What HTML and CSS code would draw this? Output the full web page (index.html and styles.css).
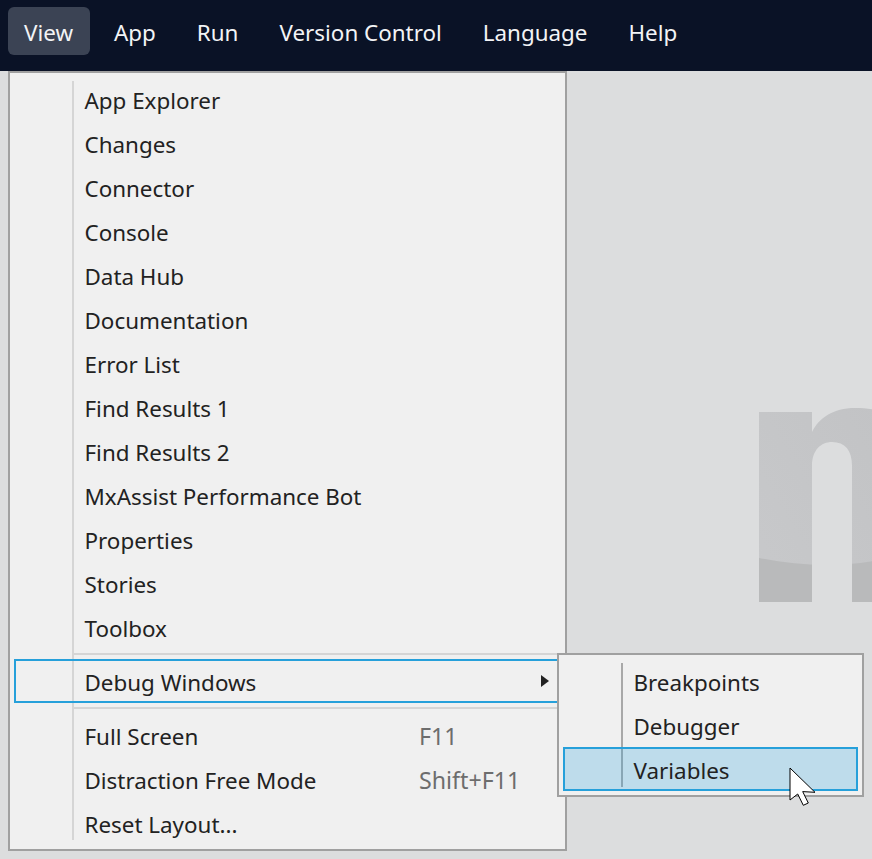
FILE: index.html
```html
<!DOCTYPE html>
<html lang="en">
<head>
<meta charset="utf-8">
<title>View menu</title>
<link rel="stylesheet" href="styles.css">
</head>
<body>
<nav class="menubar">
  <span class="nav-item active">View</span>
  <span class="nav-item">App</span>
  <span class="nav-item">Run</span>
  <span class="nav-item">Version Control</span>
  <span class="nav-item">Language</span>
  <span class="nav-item">Help</span>
</nav>
<main class="workspace">
  <svg class="logo" width="120" height="200" viewBox="0 0 120 200" aria-hidden="true">
    <defs>
      <linearGradient id="logoTop" x1="0" y1="1" x2="1" y2="0">
        <stop offset="0" stop-color="#c8c9cb"/>
        <stop offset="1" stop-color="#c2c3c5"/>
      </linearGradient>
      <clipPath id="logoN">
        <path d="M0 4H53V24C60 10 74 0 96 0C110 0 120 2 130 6V194H93V58C93 42 86 34 73 34C62 34 53 42 53 58V194H0Z"/>
      </clipPath>
    </defs>
    <g clip-path="url(#logoN)">
      <rect width="120" height="200" fill="url(#logoTop)"/>
      <path d="M0 150C40 158 80 160 120 152V200H0Z" fill="#b9babb"/>
    </g>
  </svg>

  <div class="menu main-menu">
    <ul class="menu-list">
      <li class="menu-row">App Explorer</li>
      <li class="menu-row">Changes</li>
      <li class="menu-row">Connector</li>
      <li class="menu-row">Console</li>
      <li class="menu-row">Data Hub</li>
      <li class="menu-row">Documentation</li>
      <li class="menu-row">Error List</li>
      <li class="menu-row">Find Results 1</li>
      <li class="menu-row">Find Results 2</li>
      <li class="menu-row">MxAssist Performance Bot</li>
      <li class="menu-row">Properties</li>
      <li class="menu-row">Stories</li>
      <li class="menu-row">Toolbox</li>
      <li class="menu-sep sep-before"></li>
      <li class="menu-row outlined">Debug Windows<span class="caret"></span></li>
      <li class="menu-sep sep-after"></li>
      <li class="menu-row">Full Screen<span class="shortcut">F11</span></li>
      <li class="menu-row">Distraction Free Mode<span class="shortcut">Shift+F11</span></li>
      <li class="menu-row">Reset Layout...</li>
    </ul>
  </div>

  <div class="menu sub-menu">
    <ul class="menu-list">
      <li class="menu-row">Breakpoints</li>
      <li class="menu-row">Debugger</li>
      <li class="menu-row selected">Variables</li>
    </ul>
  </div>

  <svg class="cursor" width="28" height="40" viewBox="-1 -1 28 40" aria-hidden="true">
    <path d="M0 0V32L7.7 26L13.3 37.3L18.3 35L12.7 23.6L25 24.3Z" fill="#fff" stroke="#000" stroke-width="1"/>
  </svg>
</main>
</body>
</html>
```
FILE: styles.css
```css
* { box-sizing: border-box; }

html, body {
  margin: 0;
  height: 100%;
  overflow: hidden;
}

body {
  display: flex;
  flex-direction: column;
  font-family: "Noto Sans", "Open Sans", sans-serif;
  font-size: 22.4px;
  background: #dcddde;
  color: #222;
}

.menubar {
  flex: none;
  display: flex;
  gap: 8px;
  height: 71px;
  padding: 7px 8px 16px;
  background: #0a1226;
}

.nav-item {
  display: flex;
  align-items: center;
  padding: 3px 17px 0 16px;
  border-radius: 6px;
  color: #f3f4f6;
}

.nav-item.active { background: #3b4354; }

.workspace {
  position: relative;
  flex: 1;
}

.logo {
  position: absolute;
  left: 759px;
  top: 337px;
}

.menu {
  position: absolute;
  background: #f0f0f0;
  border: 2px solid #a0a0a0;
}

.main-menu {
  left: 8px;
  top: 0;
  width: 559px;
  height: 780px;
  padding: 6px 4px;
}

.sub-menu {
  left: 557px;
  top: 582px;
  width: 307px;
  height: 144px;
  padding: 4px;
}

.menu-list {
  position: relative;
  list-style: none;
  margin: 0;
  padding: 0;
}

.menu-list::before {
  content: "";
  position: absolute;
  left: 58px;
  top: 2px;
  bottom: 7px;
  width: 2px;
  background: #d5d5d5;
}

.sub-menu .menu-list::before {
  background: #a8a8a8;
  top: 4px;
  bottom: 4px;
}

.menu-row {
  position: relative;
  display: flex;
  align-items: center;
  height: 44px;
  padding-left: 70.5px;
  padding-bottom: 2px;
}

.sub-menu .menu-row { padding-top: 4px; }

.menu-sep { margin-left: 58px; }

.sep-before { height: 8px; padding-top: 2px; }
.sep-after { height: 12px; padding-top: 4px; }

.menu-sep::before {
  content: "";
  display: block;
  height: 2px;
  background: #d5d5d5;
}

.outlined,
.selected {
  border: 2px solid #26a0da;
  padding-left: 68.5px;
}

.outlined { padding-top: 4px; }

.selected { background: rgba(38, 160, 218, 0.25); }

.caret {
  position: absolute;
  left: 525px;
  top: 14px;
  border-left: 8px solid #222;
  border-top: 6.5px solid transparent;
  border-bottom: 6.5px solid transparent;
}

.shortcut {
  position: absolute;
  left: 405px;
  font-size: 23.2px;
  color: #6d6d6d;
}

.cursor {
  position: absolute;
  left: 789px;
  top: 696px;
}
```
